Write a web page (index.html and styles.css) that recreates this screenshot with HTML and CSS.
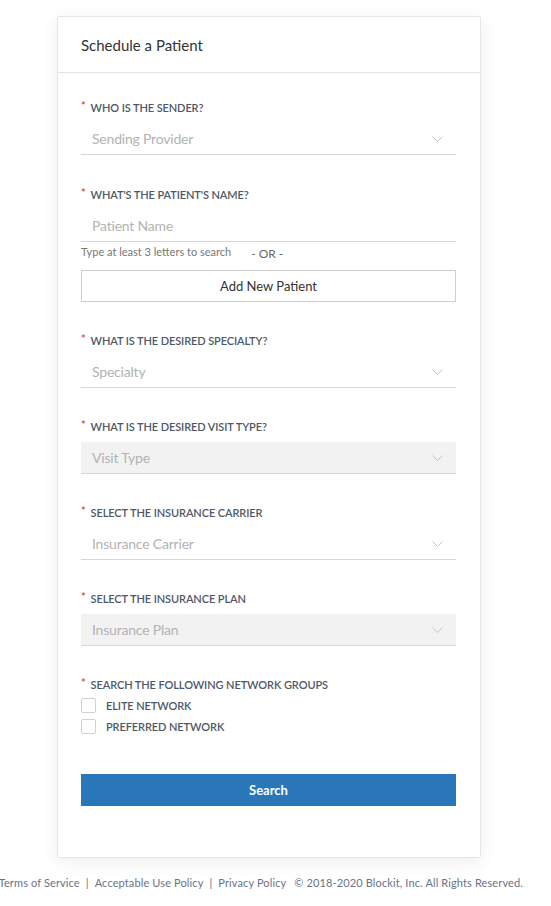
FILE: index.html
```html
<!DOCTYPE html>
<html lang="en">
<head>
    <meta charset="UTF-8">
    <meta name="viewport" content="width=device-width, initial-scale=1.0">
    <title>Schedule a Patient</title>
    <link rel="stylesheet" href="styles.css">
</head>
<body>
    <div class="page">
        <div class="card">
            <div class="card-header">Schedule a Patient</div>

            <div class="card-body">
                <div class="field field-first">
                    <div class="field-label"><span class="req">*</span>Who is the sender?</div>
                    <div class="select">
                        <span class="placeholder">Sending Provider</span>
                        <svg class="chevron" width="11" height="6" viewBox="0 0 11 6"><path d="M0.5 0.5 L5.5 5.5 L10.5 0.5" fill="none" stroke="#c4c4c4" stroke-width="1"/></svg>
                    </div>
                </div>

                <div class="field field-patient">
                    <div class="field-label"><span class="req">*</span>What's the patient's name?</div>
                    <div class="select">
                        <span class="placeholder">Patient Name</span>
                    </div>
                    <div class="helper-row">
                        <span class="helper">Type at least 3 letters to search</span>
                        <span class="or">- OR -</span>
                    </div>
                    <button class="btn-outline">Add New Patient</button>
                </div>

                <div class="field">
                    <div class="field-label"><span class="req">*</span>What is the desired specialty?</div>
                    <div class="select">
                        <span class="placeholder">Specialty</span>
                        <svg class="chevron" width="11" height="6" viewBox="0 0 11 6"><path d="M0.5 0.5 L5.5 5.5 L10.5 0.5" fill="none" stroke="#c4c4c4" stroke-width="1"/></svg>
                    </div>
                </div>

                <div class="field">
                    <div class="field-label"><span class="req">*</span>What is the desired visit type?</div>
                    <div class="select disabled">
                        <span class="placeholder">Visit Type</span>
                        <svg class="chevron" width="11" height="6" viewBox="0 0 11 6"><path d="M0.5 0.5 L5.5 5.5 L10.5 0.5" fill="none" stroke="#c4c4c4" stroke-width="1"/></svg>
                    </div>
                </div>

                <div class="field">
                    <div class="field-label"><span class="req">*</span>Select the insurance carrier</div>
                    <div class="select">
                        <span class="placeholder">Insurance Carrier</span>
                        <svg class="chevron" width="11" height="6" viewBox="0 0 11 6"><path d="M0.5 0.5 L5.5 5.5 L10.5 0.5" fill="none" stroke="#c4c4c4" stroke-width="1"/></svg>
                    </div>
                </div>

                <div class="field">
                    <div class="field-label"><span class="req">*</span>Select the insurance plan</div>
                    <div class="select disabled">
                        <span class="placeholder">Insurance Plan</span>
                        <svg class="chevron" width="11" height="6" viewBox="0 0 11 6"><path d="M0.5 0.5 L5.5 5.5 L10.5 0.5" fill="none" stroke="#c4c4c4" stroke-width="1"/></svg>
                    </div>
                </div>

                <div class="field field-networks">
                    <div class="field-label"><span class="req">*</span>Search the following network groups</div>
                    <label class="check"><span class="box"></span>Elite Network</label>
                    <label class="check"><span class="box"></span>Preferred Network</label>
                </div>

                <button class="btn-primary">Search</button>
            </div>
        </div>

        <div class="footer">
            <span>Terms of Service</span>
            <span class="sep">|</span>
            <span>Acceptable Use Policy</span>
            <span class="sep">|</span>
            <span>Privacy Policy</span>
            <span class="copy">&copy; 2018-2020 Blockit, Inc. All Rights Reserved.</span>
        </div>
    </div>
</body>
</html>
```

FILE: styles.css
```css
body {
    margin: 0;
    background-color: #ffffff;
    font-family: 'Lato', 'Open Sans', sans-serif;
    color: #333;
}

.page {
    padding-top: 16px;
}

.card {
    width: 422px;
    margin-left: 57px;
    background: #fff;
    border: 1px solid #e6e6e6;
    border-radius: 2px;
    box-shadow: 0 4px 18px rgba(0, 0, 0, 0.07);
}

.card-header {
    height: 55px;
    line-height: 56px;
    padding: 0 23px;
    font-size: 15px;
    color: #333;
    border-bottom: 1px solid #e4e4e4;
}

.card-body {
    padding: 27px 24px 51px 23px;
}

.field {
    margin-bottom: 31px;
}

.field-first {
    margin-bottom: 32px;
}

.field-label {
    height: 16px;
    line-height: 16px;
    font-size: 11px;
    font-weight: 600;
    letter-spacing: -0.1px;
    text-transform: uppercase;
    color: #4e5867;
    margin-bottom: 7px;
}

.req {
    color: #e53935;
    margin-right: 5px;
    position: relative;
    top: -2px;
}

.select {
    height: 31px;
    border-bottom: 1px solid #d6d6d6;
    display: flex;
    align-items: center;
    justify-content: space-between;
    padding: 0 13px 0 11px;
}

.select.disabled {
    background-color: #f2f2f2;
}

.placeholder {
    font-size: 14px;
    letter-spacing: -0.2px;
    color: #b3b3b3;
}

.chevron {
    display: block;
}

.field-patient {
    margin-bottom: 31px;
}

.helper-row {
    display: flex;
    align-items: flex-start;
    height: 28px;
    padding-top: 3px;
    box-sizing: border-box;
}

.helper {
    font-size: 11px;
    color: #777;
    line-height: 14px;
}

.or {
    font-size: 12px;
    color: #666;
    margin-left: 20px;
    margin-top: 2px;
    line-height: 14px;
}

.btn-outline {
    display: block;
    width: 100%;
    height: 32px;
    border: 1px solid #cfcfcf;
    background: #fff;
    font-family: inherit;
    font-size: 13px;
    color: #333;
    border-radius: 0;
}

.field-networks {
    margin-bottom: 37px;
}

.field-networks .field-label {
    margin-bottom: 2px;
}

.check {
    display: flex;
    align-items: center;
    height: 21px;
    font-size: 11px;
    font-weight: 600;
    letter-spacing: -0.1px;
    text-transform: uppercase;
    color: #4e5867;
}

.box {
    width: 13px;
    height: 13px;
    border: 1px solid #d0d0d0;
    border-radius: 2px;
    margin-right: 10px;
}

.btn-primary {
    display: block;
    width: 100%;
    height: 32px;
    border: none;
    background-color: #2976b9;
    color: #fff;
    font-family: inherit;
    font-size: 13px;
    font-weight: bold;
    border-radius: 0;
}

.footer {
    display: flex;
    justify-content: flex-end;
    align-items: center;
    white-space: nowrap;
    padding-right: 28px;
    margin-top: 16px;
    font-size: 11px;
    letter-spacing: 0.12px;
    color: #697384;
    height: 16px;
    overflow: hidden;
}

.sep {
    margin: 0 6px;
}

.copy {
    margin-left: 8px;
}
```
